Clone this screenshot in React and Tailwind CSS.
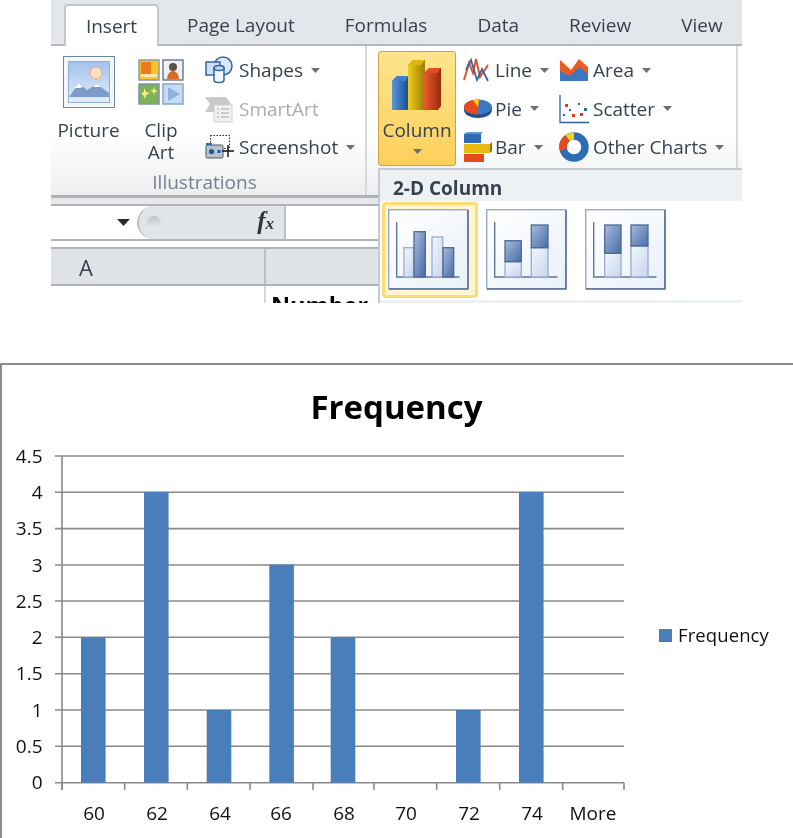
import React from "react";

const Caret = ({ className = "" }) => (
  <svg width="9" height="5" viewBox="0 0 9 5" className={className}><path d="M0 0h9L4.5 5z" fill="#6f6f6f" /></svg>
);

const PictureIcon = () => (
  <svg width="52" height="52" viewBox="0 0 52 52">
    <defs>
      <linearGradient id="sky" x1="0" y1="0" x2="0" y2="1"><stop offset="0" stopColor="#a3c2ec" /><stop offset="1" stopColor="#e3eefa" /></linearGradient>
    </defs>
    <rect x="0.5" y="0.5" width="51" height="51" fill="#f2f8fc" stroke="#6f8799" />
    <rect x="5.5" y="5.5" width="41" height="41" fill="url(#sky)" stroke="#8fb0d4" />
    <circle cx="33" cy="17" r="6" fill="#fbe0c4" stroke="#f3a77c" />
    <path d="M6 41 L16 27 L24 34 L34 28 L46 37 V41 Z" fill="#7d9ccb" />
    <path d="M12 32 L16 27 L20 31 L17 32z M30 31 L34 28 L38 31 L34 31z" fill="#fff" />
  </svg>
);

const ClipArtIcon = () => (
  <svg width="46" height="46" viewBox="0 0 46 46">
    <rect x="1" y="1" width="20" height="20" fill="#f9c623" stroke="#8a9bb0" strokeWidth="1.5" />
    <rect x="3" y="3" width="10" height="12" fill="#ee7a1e" />
    <rect x="3" y="15" width="16" height="3" fill="#fbe7b0" />
    <rect x="25" y="1" width="20" height="20" fill="#eef0f2" stroke="#6d7f94" strokeWidth="1.5" />
    <circle cx="35" cy="8" r="4" fill="#5d5048" />
    <path d="M29 20 Q30 12 35 12 Q40 12 41 20z" fill="#d9691f" />
    <rect x="1" y="25" width="20" height="20" fill="#7db257" stroke="#7e93a8" strokeWidth="1.5" />
    <path d="M6 29l2 4 4 1-4 2-1 4-2-4-2-2 3-1z M16 28l1 3 3 1-3 1-1 3-1-3-3-1 3-1z" fill="#f7ee86" />
    <rect x="25" y="25" width="20" height="20" fill="#c7dbf4" stroke="#89a6c8" strokeWidth="1.5" />
    <path d="M30 28 L42 35 L30 42z" fill="#8cb2e4" />
  </svg>
);

const ShapesIcon = () => (
  <svg width="28" height="28" viewBox="0 0 28 28">
    <circle cx="18" cy="10" r="9" fill="#dbe9f8" stroke="#2f66a6" strokeWidth="1.5" />
    <rect x="1" y="6" width="14" height="13" fill="#cfe0f4" stroke="#2f66a6" strokeWidth="1.5" />
    <path d="M9 12 V24 A5 2.5 0 0 0 19 24 V12z" fill="#f1f6fb" stroke="#2f66a6" strokeWidth="1.5" />
    <ellipse cx="14" cy="12" rx="5" ry="2.5" fill="#bcd4ee" stroke="#2f66a6" strokeWidth="1.5" />
  </svg>
);

const SmartArtIcon = () => (
  <svg width="28" height="28" viewBox="0 0 28 28">
    <path d="M0 2H21L26 9 21 17H0L5 9z" fill="#c9c9c9" />
    <rect x="9" y="10" width="18" height="17" fill="#f1f1f1" stroke="#cfcfcf" />
    <path d="M12 14h2M16 14h8M12 18h2M16 18h8M12 22h2M16 22h8" stroke="#bdbdbd" strokeWidth="1.3" />
  </svg>
);

const ScreenshotIcon = () => (
  <svg width="30" height="26" viewBox="0 0 30 26">
    <rect x="5.5" y="1.5" width="19" height="13" fill="none" stroke="#222" strokeDasharray="1.5 1.5" />
    <rect x="1" y="11" width="17" height="13" rx="1.5" fill="#b9c3cf" stroke="#4d5763" />
    <rect x="1" y="9" width="6" height="2" fill="#2e6eb4" />
    <circle cx="6.5" cy="17.5" r="2.6" fill="#1e5a9c" />
    <rect x="12.5" y="16" width="3" height="3" fill="#1e5a9c" />
    <path d="M23 11V23M17 17H29" stroke="#111" strokeWidth="1.4" />
  </svg>
);

const ColumnIcon = () => (
  <svg width="50" height="50" viewBox="0 0 50 50">
    <defs>
      <linearGradient id="cb" x1="0" x2="1"><stop offset="0" stopColor="#5c97dc" /><stop offset="1" stopColor="#1c4f94" /></linearGradient>
      <linearGradient id="cy" x1="0" x2="1"><stop offset="0" stopColor="#f0cf1e" /><stop offset="1" stopColor="#9c7a04" /></linearGradient>
      <linearGradient id="cr" x1="0" x2="1"><stop offset="0" stopColor="#ec5b2c" /><stop offset="1" stopColor="#962a0a" /></linearGradient>
    </defs>
    <path d="M0 21 L5 16 H16 V50 H0z" fill="url(#cb)" />
    <path d="M0 21 L5 16 H17 L13 21z" fill="#3f7fcc" />
    <path d="M16 5 L21 0 H33 V50 H16z" fill="url(#cy)" />
    <path d="M16 5 L21 0 H33 L29 5z" fill="#d9b714" />
    <path d="M32 13 L37 8 H49 V46 L46 50 H32z" fill="url(#cr)" />
    <path d="M32 13 L37 8 H49 L45 13z" fill="#e0501f" />
  </svg>
);

const LineIcon = () => (
  <svg width="26" height="26" viewBox="0 0 26 26">
    <path d="M1 23 L6 6 L10 16 L13 2 L17 20 L25 8" fill="none" stroke="#e4532b" strokeWidth="2" />
    <path d="M3 13 L8 3 L14 23 L19 12 L25 24" fill="none" stroke="#2f66a6" strokeWidth="1.8" />
  </svg>
);

const PieIcon = () => (
  <svg width="30" height="20" viewBox="0 0 30 20">
    <path d="M1 8V11A14 8 0 0 0 29 11V8z" fill="#204f8e" />
    <ellipse cx="15" cy="8" rx="14" ry="7.5" fill="#3f78c2" />
    <path d="M15 8 L17 0.6 A14 7.5 0 0 0 1 8 A14 7.5 0 0 0 14 15.5z" fill="#ea4a1a" />
    <path d="M15 8 L10 1 A14 7.5 0 0 1 16 .5z" fill="#f3d420" />
  </svg>
);

const BarIcon = () => (
  <svg width="30" height="30" viewBox="0 0 30 30">
    <rect x="1" y="2" width="17" height="9" fill="#2f6cb8" />
    <path d="M1 2 L4 0 H20 L18 2z" fill="#5f97d8" />
    <rect x="1" y="12" width="26" height="9" fill="#e8b90e" />
    <path d="M27 12 L29 10 V19 L27 21z" fill="#8f7400" />
    <rect x="1" y="22" width="20" height="8" fill="#e8481a" />
  </svg>
);

const AreaIcon = () => (
  <svg width="30" height="24" viewBox="0 0 30 24">
    <path d="M1 2 L12 12 L20 1 L29 9 V22 H1z" fill="#ee5a24" />
    <path d="M1 13 L11 18 L20 9 L29 16 V23 H1z" fill="#3d77bd" />
  </svg>
);

const ScatterIcon = () => (
  <svg width="30" height="30" viewBox="0 0 30 30">
    <path d="M1 1V28.5H30" fill="none" stroke="#2f5f9e" strokeWidth="1.3" />
    <g fill="#dd3b1c"><rect x="6" y="10" width="3" height="3" /><rect x="13" y="20" width="3" height="3" /><rect x="21" y="19" width="3" height="3" /></g>
    <g fill="#2f66a6"><rect x="4" y="20" width="2" height="2" /><rect x="10" y="15" width="2" height="2" /><rect x="19" y="9" width="2" height="2" /><rect x="25" y="14" width="3" height="3" /></g>
  </svg>
);

const OtherIcon = () => (
  <svg width="30" height="30" viewBox="0 0 30 30">
    <circle cx="15" cy="15" r="11" fill="none" stroke="#2e6cb5" strokeWidth="7.5" />
    <path d="M4.5 18 A11 11 0 0 1 8 6.5" fill="none" stroke="#e24a1c" strokeWidth="7.5" />
    <path d="M8.5 6 A11 11 0 0 1 15 4" fill="none" stroke="#f2d41d" strokeWidth="7.5" />
  </svg>
);

const SmallButton = ({ icon, label, w, muted, caret = true }) => (
  <div className="flex h-[38.5px] items-center">
    <span className={`flex shrink-0 items-center ${w}`}>{icon}</span>
    <span className={muted ? "text-[#a9adb2]" : "text-[#36424f]"}>{label}</span>
    {caret && <Caret className="ml-[8px]" />}
  </div>
);

const Thumb = ({ bars }) => (
  <svg width="82" height="82" viewBox="0 0 82 82" className="block">
    <defs>
      <linearGradient id="tf" x1="0" y1="0" x2="1" y2="1"><stop offset="0" stopColor="#ffffff" /><stop offset="1" stopColor="#eaf1fa" /></linearGradient>
      <linearGradient id="dk" x1="0" y1="0" x2="1" y2="1"><stop offset="0" stopColor="#a9bbdc" /><stop offset="1" stopColor="#466ca8" /></linearGradient>
      <linearGradient id="lt" x1="0" y1="0" x2="1" y2="1"><stop offset="0" stopColor="#f4f8fd" /><stop offset="1" stopColor="#c5d4ec" /></linearGradient>
    </defs>
    <rect x="0.7" y="0.7" width="79" height="79" fill="url(#tf)" stroke="#97a9cc" strokeWidth="1.4" />
    <path d="M80 1V80H1" fill="none" stroke="#5a6f99" strokeWidth="1.6" />
    <path d="M8.7 13V68H71.5" fill="none" stroke="#5f76a3" strokeWidth="1.4" />
    {bars.map((b, i) => (
      <rect key={i} x={b[0]} y={b[1]} width={b[2]} height={b[3]} fill={b[4] ? "url(#dk)" : "url(#lt)"} stroke={b[4] ? "#4d6699" : "#97abd0"} strokeWidth="1.3" />
    ))}
  </svg>
);

const GRID = [
  [456, "4.5"], [492.3, "4"], [528.6, "3.5"], [565, "3"], [601, "2.5"],
  [637.3, "2"], [673.7, "1.5"], [710, "1"], [746.3, "0.5"],
];
const ZERO = 782.7;
const BARS = [[81, 2], [144, 4], [206.7, 1], [269.3, 3], [330.7, 2], [456, 1], [519, 4]];
const TICKS = [62, 124.7, 187.3, 250, 313, 374, 436.7, 499.7, 562.7, 624];
const XLABELS = [[94, "60"], [157, "62"], [220, "64"], [281, "66"], [344, "68"], [406, "70"], [469, "72"], [532, "74"], [593, "More"]];
const TOP = 440;

const Chart = () => (
  <svg width="640" height="395" viewBox={`0 ${TOP} 640 395`} className="shrink-0 -ml-[2px]">
    {GRID.map(([y]) => <line key={y} x1="55" x2="624" y1={y} y2={y} stroke="#8a8a8a" strokeWidth="1.6" />)}
    <line x1="55" x2="624" y1={ZERO} y2={ZERO} stroke="#8a8a8a" strokeWidth="1.6" />
    <line x1="62" x2="62" y1="456" y2="790" stroke="#8a8a8a" strokeWidth="1.6" />
    {TICKS.map((x) => <line key={x} x1={x} x2={x} y1={ZERO} y2="790" stroke="#8a8a8a" strokeWidth="1.6" />)}
    {BARS.map(([x, v]) => <rect key={x} x={x} y={ZERO - v * 72.7} width="24.6" height={v * 72.7} fill="#4a7ebb" />)}
    {GRID.map(([y, t]) => <text key={t} x="42.5" y={y + 6.5} textAnchor="end" fontSize="19" fill="#111">{t}</text>)}
    <text x="42.5" y={ZERO + 6.5} textAnchor="end" fontSize="19" fill="#111">0</text>
    {XLABELS.map(([x, t]) => <text key={t} x={x} y="820" textAnchor="middle" fontSize="19" fill="#111">{t}</text>)}
  </svg>
);

export default function App() {
  return (
    <div className="h-[838px] w-[793px] overflow-hidden bg-white font-['Open_Sans',sans-serif]">
      <div className="relative ml-[51px] h-[303px] w-[691px] overflow-hidden text-[19px] leading-[22px] blur-[0.4px]">
        {/* tabs */}
        <div className="flex h-[46px] items-end border-b-2 border-[#b4b8bd] bg-[#e3e6ea] pl-[13px] text-[#36424f]">
          <div className="-mb-[2px] flex h-[42px] w-[95px] items-center justify-center rounded-t-[4px] border-x-2 border-t-2 border-[#c3c6ca] bg-white">Insert</div>
          <div className="ml-[28px] flex h-[38px] items-center gap-[50px]">
            <span>Page Layout</span><span>Formulas</span><span>Data</span><span>Review</span><span>View</span>
          </div>
        </div>
        {/* ribbon */}
        <div className="flex h-[152px] border-b-[3px] border-[#aeb2b7] bg-gradient-to-b from-white from-60% to-[#eceef0]">
          <div className="flex w-[316px] flex-col border-r-2 border-[#d6d9dc]">
            <div className="flex h-[125px]">
              <div className="ml-[7px] flex w-[61px] flex-col items-center pt-[10px]">
                <PictureIcon />
                <span className="mt-[11px] text-[#36424f]">Picture</span>
              </div>
              <div className="ml-[12px] flex w-[60px] flex-col items-center pt-[13px]">
                <ClipArtIcon />
                <span className="mt-[14px] text-center text-[#36424f]">Clip<br />Art</span>
              </div>
              <div className="ml-[14px] flex flex-col pt-[5px]">
                <SmallButton w="w-[34px]" icon={<ShapesIcon />} label="Shapes" />
                <SmallButton w="w-[34px]" icon={<SmartArtIcon />} label="SmartArt" muted caret={false} />
                <SmallButton w="w-[34px]" icon={<ScreenshotIcon />} label="Screenshot" />
              </div>
            </div>
            <div className="pr-[7px] text-center text-[#76808d]">Illustrations</div>
          </div>
          <div className="flex w-[371px] border-r-2 border-[#d6d9dc] pl-[11px]">
            <div className="mt-[5px] flex h-[115px] w-[78px] flex-col items-center rounded-[3px] border border-[#c9a444] bg-gradient-to-b from-[#fde48c] to-[#fdd05c] pt-[8px] text-[#36424f]">
              <ColumnIcon />
              <span className="mt-[9px]">Column</span>
              <Caret className="mt-[8px]" />
            </div>
            <div className="ml-[7px] flex w-[96px] flex-col pt-[5px]">
              <SmallButton w="w-[32px]" icon={<LineIcon />} label="Line" />
              <SmallButton w="w-[32px]" icon={<PieIcon />} label="Pie" />
              <SmallButton w="w-[32px]" icon={<BarIcon />} label="Bar" />
            </div>
            <div className="flex flex-col pt-[5px]">
              <SmallButton w="w-[34px]" icon={<AreaIcon />} label="Area" />
              <SmallButton w="w-[34px]" icon={<ScatterIcon />} label="Scatter" />
              <SmallButton w="w-[34px]" icon={<OtherIcon />} label="Other Charts" />
            </div>
          </div>
        </div>
        {/* formula bar */}
        <div className="h-[6px] bg-[#e6e8eb]" />
        <div className="flex h-[37px] items-stretch border-y-2 border-[#b0b4b9] bg-white">
          <div className="flex w-[86px] items-center justify-end pr-[7px]">
            <svg width="13" height="7" viewBox="0 0 13 7"><path d="M0 0h13L6.5 7z" fill="#2b2b2b" /></svg>
          </div>
          <div className="flex w-[149px] items-center justify-between rounded-l-[18px] border-l-2 border-r-2 border-[#bcc0c4] bg-[#e1e4e8] pl-[8px] pr-[10px]">
            <span className="h-[14px] w-[14px] rounded-full bg-gradient-to-b from-[#c0c3c6] to-[#eceef0]" />
            <span className="font-['Liberation_Serif',serif] text-[25px] font-bold italic text-[#333]">f<span className="text-[17px]">x</span></span>
          </div>
        </div>
        <div className="h-[6px] bg-white" />
        <div className="flex h-[39px] border-y-2 border-[#b0b4b9] bg-[#dfe3e8]">
          <div className="flex w-[215px] items-center border-r-2 border-[#bcc0c5] pl-[28px] text-[22px] text-[#36424f]">A</div>
        </div>
        <div className="flex h-[20px] bg-white">
          <div className="w-[215px] border-r-2 border-[#d5d7da]" />
          <span className="pl-[5px] pt-[8px] text-[23.5px] font-bold text-black">Number</span>
        </div>
        {/* gallery */}
        <div className="absolute left-[327px] top-[168px] h-[135px] w-[364px] border-l-2 border-t-2 border-[#c6c9cd] bg-white">
          <div className="h-[31px] bg-[#eef1f4] pl-[13px] pt-[7px] text-[19px] font-bold leading-[22px] text-[#36424f]">2-D Column</div>
          <div className="relative flex h-[99px] gap-[16.3px] pl-[8px] pt-[8px]">
            <div className="absolute left-[1.7px] top-[1px] h-[96px] w-[96px] rounded-[4px] border-[3px] border-[#fcdc74] bg-[#fff6cf]" />
            <div className="relative"><Thumb bars={[[16, 38.7, 10, 29.3, 0], [26, 22.7, 11.3, 45.3, 1], [44, 28, 10.7, 40, 0], [55, 38.7, 10.7, 29.3, 1]]} /></div>
            <div className="relative"><Thumb bars={[[19, 52.7, 16.3, 15.3, 0], [19, 31.7, 16.3, 21, 1], [45.3, 38.7, 16.7, 29.3, 0], [45.3, 16, 16.7, 22.7, 1]]} /></div>
            <div className="relative"><Thumb bars={[[19.7, 44.3, 16.3, 23.7, 0], [19.7, 16, 16.3, 28.3, 1], [46, 37, 17, 31, 0], [46, 16, 17, 21, 1]]} /></div>
          </div>
          <div className="h-[5px] bg-[#eef1f4]" />
        </div>
      </div>

      {/* chart */}
      <div className="mt-[60px] flex h-[475px] w-[793px] flex-col border-l-2 border-t-2 border-[#8c8c8c] blur-[0.2px]">
        <div className="h-[75px] pr-[2px] pt-[20px] text-center text-[33px] font-bold leading-[44px] text-black">Frequency</div>
        <div className="flex items-start">
          <Chart />
          <div className="ml-[19px] mt-[184px] flex items-center gap-[6px] text-[18.5px] leading-[22px] tracking-[0.1px] text-[#111]">
            <span className="h-[13px] w-[13px] bg-[#4a7ebb]" />
            <span>Frequency</span>
          </div>
        </div>
      </div>
    </div>
  );
}
